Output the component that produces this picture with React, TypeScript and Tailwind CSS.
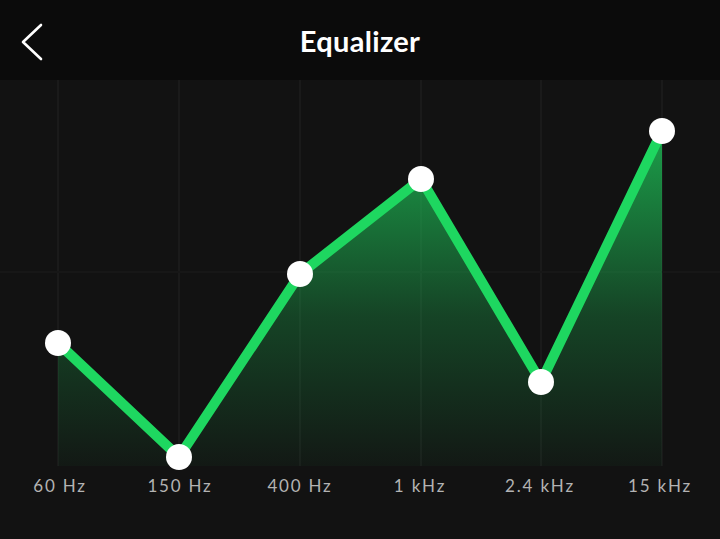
const bands = [
  { label: '60 Hz', x: 58, y: 263 },
  { label: '150 Hz', x: 179, y: 377 },
  { label: '400 Hz', x: 300, y: 194 },
  { label: '1 kHz', x: 421, y: 99 },
  { label: '2.4 kHz', x: 541, y: 302 },
  { label: '15 kHz', x: 662, y: 51 },
];

const BASE = 386;

function BackArrow() {
  return (
    <svg width="24" height="40" viewBox="0 0 24 40" className="absolute left-[20px] top-[22px]">
      <polyline points="21,3 3,20 21,37" fill="none" stroke="#ffffff" strokeWidth="2.6" strokeLinecap="round" strokeLinejoin="round" />
    </svg>
  );
}

function Curve() {
  const line = bands.map((b) => `${b.x},${b.y}`).join(' ');
  const area = `M${bands[0].x},${BASE} L${line.replace(/ /g, ' L')} L${bands[bands.length - 1].x},${BASE} Z`;

  return (
    <svg width="720" height="390" viewBox="0 0 720 390" className="block">
      <defs>
        <linearGradient id="eqFill" gradientUnits="userSpaceOnUse" x1="0" y1="50" x2="0" y2={BASE}>
          <stop offset="0" stopColor="#1db954" stopOpacity="0.85" />
          <stop offset="0.55" stopColor="#1db954" stopOpacity="0.3" />
          <stop offset="1" stopColor="#1db954" stopOpacity="0.04" />
        </linearGradient>
      </defs>
      {bands.map((b) => (
        <line key={b.label} x1={b.x} y1="0" x2={b.x} y2={BASE} stroke="#1a1a1a" strokeWidth="2" />
      ))}
      <line x1="0" y1="192" x2="720" y2="192" stroke="#171717" strokeWidth="2" />
      <path d={area} fill="url(#eqFill)" />
      <polyline
        points={line}
        fill="none"
        stroke="#1ed760"
        strokeWidth="10"
        strokeLinejoin="round"
        strokeLinecap="round"
      />
      {bands.map((b) => (
        <circle key={b.label} cx={b.x} cy={b.y} r="13" fill="#ffffff" />
      ))}
    </svg>
  );
}

export default function App() {
  return (
    <div className="w-[720px] h-[539px] bg-[#121212] overflow-hidden" style={{ fontFamily: 'Lato, "Noto Sans", sans-serif' }}>
      <header className="relative h-[80px] bg-[#0b0b0b] flex items-center justify-center">
        <BackArrow />
        <h1 className="text-white text-[29px] font-bold tracking-[0.3px] mt-[2px]">Equalizer</h1>
      </header>
      <Curve />
      <div className="grid grid-cols-6 mt-[3px]">
        {bands.map((b) => (
          <span key={b.label} className="text-center text-[#b3b3b3] text-[17px] tracking-[1.8px]">
            {b.label}
          </span>
        ))}
      </div>
    </div>
  );
}
